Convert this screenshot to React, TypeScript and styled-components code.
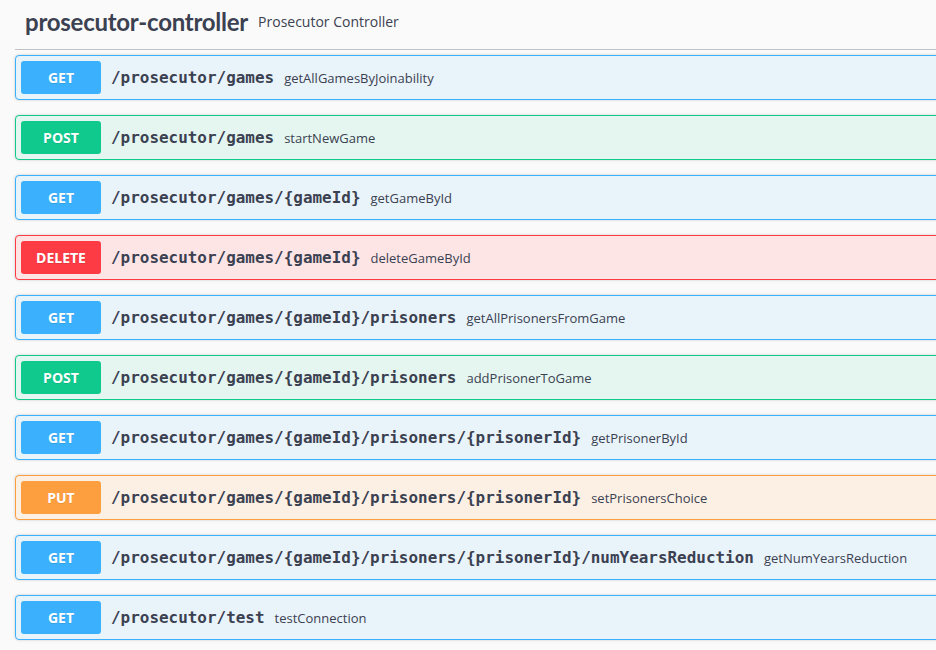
import React from "react";
import styled, { createGlobalStyle } from "styled-components";

const Global = createGlobalStyle`
  html, body {
    margin: 0;
    padding: 0;
    background: #fafafa;
    overflow: hidden;
  }
  body {
    font-family: "Open Sans", "Noto Sans", sans-serif;
    color: #3b4151;
  }
`;

type Method = "GET" | "POST" | "DELETE" | "PUT";

const COLORS: Record<Method, { main: string; bg: string }> = {
  GET: { main: "#3bb0fc", bg: "#e9f3fa" },
  POST: { main: "#10c98d", bg: "#e4f6ef" },
  DELETE: { main: "#fc3b45", bg: "#fde5e6" },
  PUT: { main: "#fd9f3f", bg: "#fcf0e4" },
};

const Page = styled.div`
  width: 1000px;
  padding: 0 15px;
  box-sizing: border-box;
`;

const TagHeader = styled.h4`
  display: flex;
  align-items: center;
  margin: 0 0 5px;
  padding: 5px 20px 10px 10px;
  border-bottom: 1px solid rgba(59, 65, 81, 0.3);
  font-family: "Lato", "Open Sans", sans-serif;
  color: #3b4151;
`;

const TagName = styled.span`
  font-size: 24px;
  font-weight: 700;
  line-height: 34px;
  letter-spacing: -0.25px;
`;

const TagDesc = styled.small`
  font-family: "Open Sans", sans-serif;
  font-size: 14px;
  font-weight: 400;
  padding-left: 10px;
  line-height: 34px;
`;

const Block = styled.div<{ $method: Method }>`
  margin: 0 0 15px;
  border: 1px solid ${(p) => COLORS[p.$method].main};
  background: ${(p) => COLORS[p.$method].bg};
  border-radius: 4px;
  box-shadow: 0 0 3px rgba(0, 0, 0, 0.19);
`;

const Summary = styled.div`
  display: flex;
  align-items: center;
  padding: 5px;
`;

const Badge = styled.span<{ $method: Method }>`
  display: inline-flex;
  align-items: center;
  justify-content: center;
  box-sizing: border-box;
  min-width: 80px;
  height: 33px;
  padding: 0 15px;
  border-radius: 3px;
  background: ${(p) => COLORS[p.$method].main};
  color: #fff;
  font-family: "Open Sans", sans-serif;
  font-size: 14px;
  font-weight: 700;
  text-shadow: 0 1px 0 rgba(0, 0, 0, 0.1);
`;

const Path = styled.span`
  padding: 0 10px;
  font-family: "DejaVu Sans Mono", monospace;
  font-size: 15.95px;
  font-weight: 700;
  color: #3b4151;
`;

const Desc = styled.span`
  font-family: "Open Sans", sans-serif;
  font-size: 13px;
  color: #3b4151;
`;

const ops: { method: Method; path: string; desc: string }[] = [
  { method: "GET", path: "/prosecutor/games", desc: "getAllGamesByJoinability" },
  { method: "POST", path: "/prosecutor/games", desc: "startNewGame" },
  { method: "GET", path: "/prosecutor/games/{gameId}", desc: "getGameById" },
  { method: "DELETE", path: "/prosecutor/games/{gameId}", desc: "deleteGameById" },
  { method: "GET", path: "/prosecutor/games/{gameId}/prisoners", desc: "getAllPrisonersFromGame" },
  { method: "POST", path: "/prosecutor/games/{gameId}/prisoners", desc: "addPrisonerToGame" },
  { method: "GET", path: "/prosecutor/games/{gameId}/prisoners/{prisonerId}", desc: "getPrisonerById" },
  { method: "PUT", path: "/prosecutor/games/{gameId}/prisoners/{prisonerId}", desc: "setPrisonersChoice" },
  {
    method: "GET",
    path: "/prosecutor/games/{gameId}/prisoners/{prisonerId}/numYearsReduction",
    desc: "getNumYearsReduction",
  },
  { method: "GET", path: "/prosecutor/test", desc: "testConnection" },
];

export default function App() {
  return (
    <>
      <Global />
      <Page>
        <TagHeader>
          <TagName>prosecutor-controller</TagName>
          <TagDesc>Prosecutor Controller</TagDesc>
        </TagHeader>
        {ops.map((op, i) => (
          <Block key={i} $method={op.method}>
            <Summary>
              <Badge $method={op.method}>{op.method}</Badge>
              <Path>{op.path}</Path>
              <Desc>{op.desc}</Desc>
            </Summary>
          </Block>
        ))}
      </Page>
    </>
  );
}
